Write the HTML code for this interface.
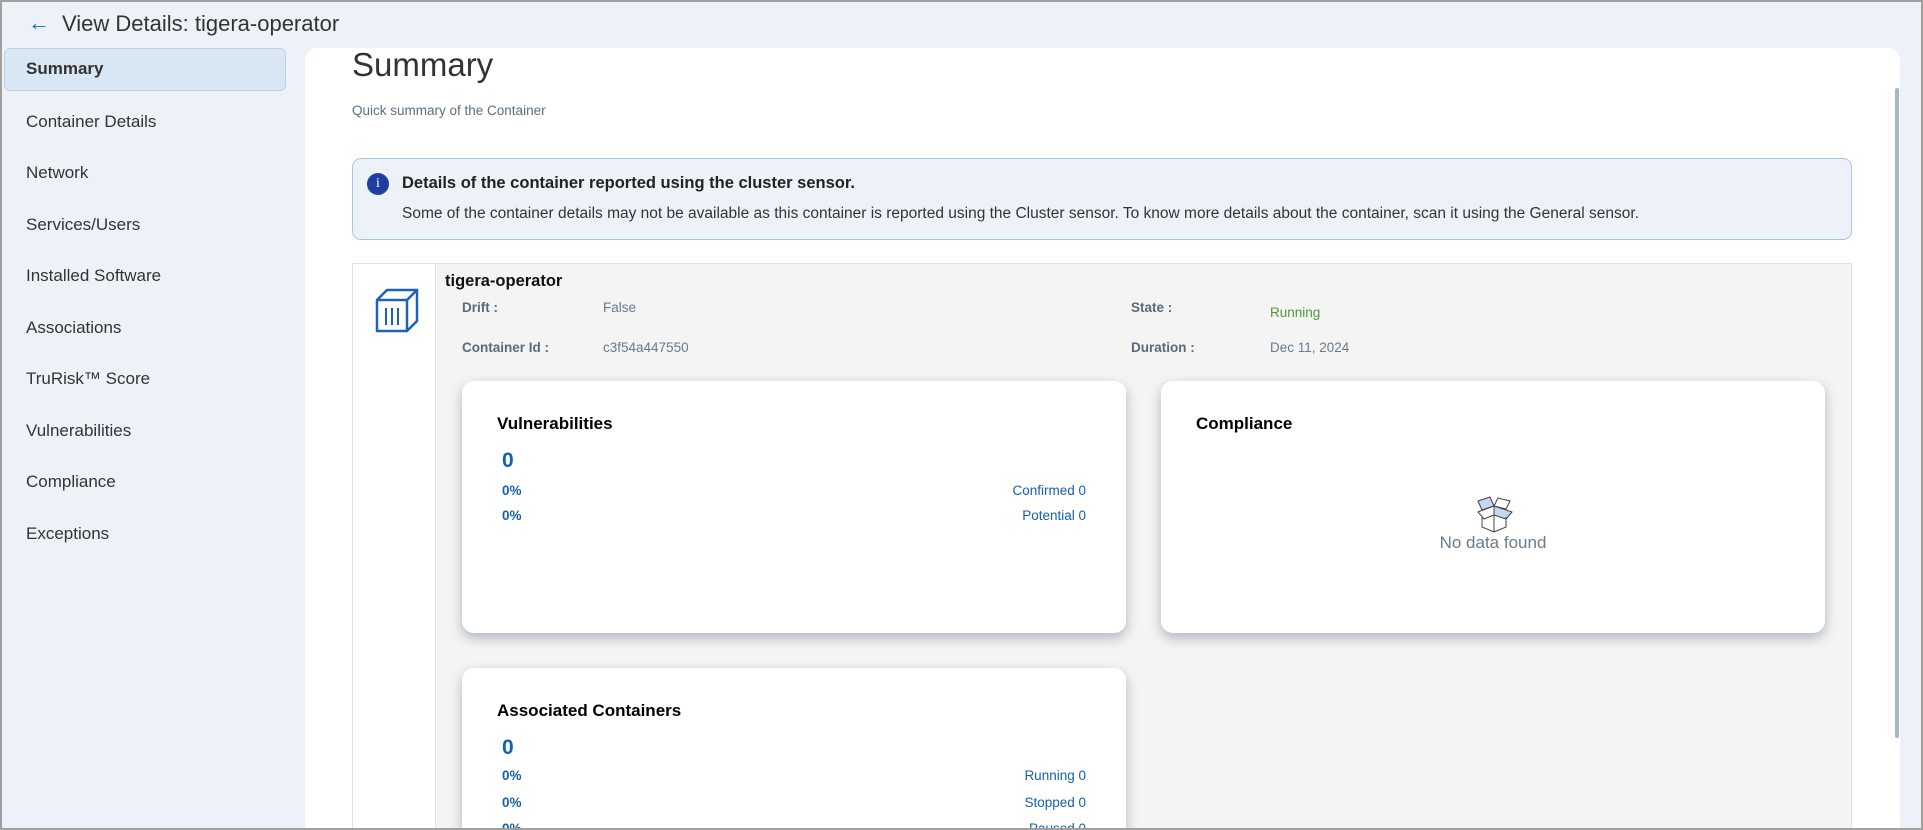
<!DOCTYPE html>
<html><head><meta charset="utf-8"><style>
*{box-sizing:border-box;margin:0;padding:0}
html,body{width:1923px;height:830px;overflow:hidden}
body{font-family:"Liberation Sans",sans-serif;}
#wrap{position:relative;width:1923px;height:830px;overflow:hidden;background:#edf2f9;border:2px solid #a0a0a0;}
.abs{position:absolute;white-space:nowrap}
.nav{position:absolute;left:24px;font-size:17px;color:#333;}
.card{position:absolute;background:#fff;border-radius:12px;box-shadow:0 5px 12px rgba(70,90,110,.4);}
.ct{position:absolute;left:35px;font-size:17px;font-weight:bold;color:#000}
.blue{color:#1460b0}
</style></head><body><div id="wrap">
<div class="abs" style="left:26px;top:8px;font-size:22px;color:#1a62b8">&#8592;</div>
<div class="abs" style="left:60px;top:9px;font-size:22px;color:#333">View Details: tigera-operator</div>

<div class="abs" style="left:2px;top:46px;width:282px;height:43px;background:#d9e6f4;border:1px solid #bcd2ea;border-radius:6px"></div>
<div class="nav" style="top:57px;font-weight:bold">Summary</div>
<div class="nav" style="top:110px">Container Details</div>
<div class="nav" style="top:161px">Network</div>
<div class="nav" style="top:213px">Services/Users</div>
<div class="nav" style="top:264px">Installed Software</div>
<div class="nav" style="top:316px">Associations</div>
<div class="nav" style="top:367px">TruRisk™ Score</div>
<div class="nav" style="top:419px">Vulnerabilities</div>
<div class="nav" style="top:470px">Compliance</div>
<div class="nav" style="top:522px">Exceptions</div>

<div class="abs" style="left:303px;top:46px;width:1595px;height:800px;background:#fff;border-radius:12px 12px 0 0"></div>
<div class="abs" style="left:1893px;top:86px;width:4px;height:650px;background:#a9b7c3;border-radius:2px"></div>
<div class="abs" style="left:350px;top:44px;font-size:33px;color:#333">Summary</div>
<div class="abs" style="left:350px;top:101px;font-size:13.5px;color:#5a7080">Quick summary of the Container</div>

<div class="abs" style="left:350px;top:156px;width:1500px;height:82px;background:#edf2f9;border:1px solid #a9c4e4;border-radius:9px"></div>
<div class="abs" style="left:365px;top:171px;width:22px;height:22px;border-radius:50%;background:#1f3ea0;color:#fff;font-size:14px;text-align:center;line-height:22px;font-family:'Liberation Serif',serif">i</div>
<div class="abs" style="left:400px;top:172px;font-size:16.5px;font-weight:bold;color:#222">Details of the container reported using the cluster sensor.</div>
<div class="abs" style="left:400px;top:203px;font-size:15.5px;color:#333">Some of the container details may not be available as this container is reported using the Cluster sensor. To know more details about the container, scan it using the General sensor.</div>

<div class="abs" style="left:350px;top:261px;width:1500px;height:580px;background:#f4f4f4;border:1px solid #e2e2e2"></div>
<div class="abs" style="left:351px;top:262px;width:83px;height:580px;background:#fff;border-right:1px solid #e2e2e2"></div>
<svg class="abs" style="left:372px;top:286px" width="46" height="46" viewBox="0 0 46 46" fill="none" stroke="#1d62b5" stroke-width="2.5"><path d="M3 12 L13 2 L43 2 L43 33 L33 43 L3 43 Z M3 12 L33 12 L43 2 M33 12 L33 43"/><path d="M12 20V37M18 20V37M24 20V37" stroke-width="2"/></svg>
<div class="abs" style="left:443px;top:270px;font-size:16.5px;font-weight:bold;color:#111">tigera-operator</div>
<div class="abs" style="left:460px;top:298px;font-size:13.5px;font-weight:bold;color:#5a6a78">Drift :</div>
<div class="abs" style="left:601px;top:298px;font-size:13.5px;color:#6a7a88">False</div>
<div class="abs" style="left:460px;top:338px;font-size:13.5px;font-weight:bold;color:#5a6a78">Container Id :</div>
<div class="abs" style="left:601px;top:338px;font-size:13.5px;color:#6a7a88">c3f54a447550</div>
<div class="abs" style="left:1129px;top:298px;font-size:13.5px;font-weight:bold;color:#5a6a78">State :</div>
<div class="abs" style="left:1268px;top:303px;font-size:13.5px;color:#4a9a3a">Running</div>
<div class="abs" style="left:1129px;top:338px;font-size:13.5px;font-weight:bold;color:#5a6a78">Duration :</div>
<div class="abs" style="left:1268px;top:338px;font-size:13.5px;color:#6a7a88">Dec 11, 2024</div>

<div class="card" style="left:460px;top:379px;width:664px;height:252px">
 <div class="ct" style="top:33px">Vulnerabilities</div>
 <div class="abs blue" style="left:40px;top:68px;font-size:21px;font-weight:bold">0</div>
 <div class="abs blue" style="left:40px;top:102px;font-size:13.5px;font-weight:bold">0%</div>
 <div class="abs blue" style="left:40px;top:127px;font-size:13.5px;font-weight:bold">0%</div>
 <div class="abs blue" style="right:40px;top:102px;font-size:13.5px">Confirmed 0</div>
 <div class="abs blue" style="right:40px;top:127px;font-size:13.5px">Potential 0</div>
</div>
<div class="card" style="left:1159px;top:379px;width:664px;height:252px">
 <div class="ct" style="top:33px">Compliance</div>
 <svg class="abs" style="left:311px;top:114px" width="44" height="38" viewBox="0 0 44 38" fill="none" stroke="#444" stroke-width="1"><path d="M6 6L18 2L22 11L10 15Z" fill="#c3d8ee"/><path d="M26 3L38 6L34 14L22 11Z"/><path d="M22 11L6 17L12 24L22 20Z"/><path d="M22 11L40 17L34 24L22 20Z" fill="#c3d8ee"/><path d="M10 22V32L22 37L34 32V22M22 20V37"/></svg>
 <div class="abs" style="left:0;width:664px;text-align:center;top:152px;font-size:17px;color:#6a7d8c">No data found</div>
</div>
<div class="card" style="left:460px;top:666px;width:664px;height:200px">
 <div class="ct" style="top:33px">Associated Containers</div>
 <div class="abs blue" style="left:40px;top:68px;font-size:21px;font-weight:bold">0</div>
 <div class="abs blue" style="left:40px;top:100px;font-size:13.5px;font-weight:bold">0%</div>
 <div class="abs blue" style="left:40px;top:127px;font-size:13.5px;font-weight:bold">0%</div>
 <div class="abs blue" style="left:40px;top:153px;font-size:13.5px;font-weight:bold">0%</div>
 <div class="abs blue" style="right:40px;top:100px;font-size:13.5px">Running 0</div>
 <div class="abs blue" style="right:40px;top:127px;font-size:13.5px">Stopped 0</div>
 <div class="abs blue" style="right:40px;top:153px;font-size:13.5px">Paused 0</div>
</div>
</div></body></html>
